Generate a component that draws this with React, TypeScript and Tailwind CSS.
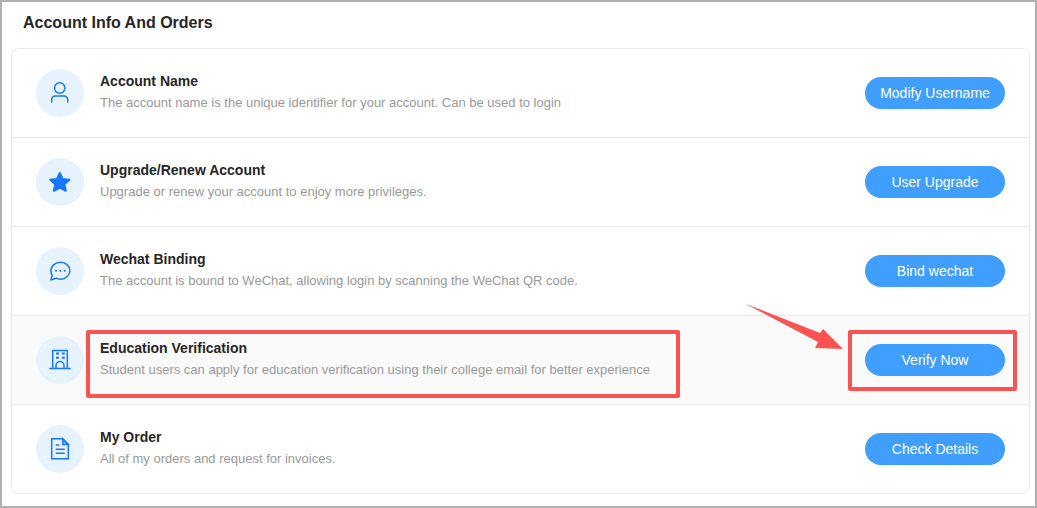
import { ReactNode } from 'react'

interface RowProps {
  icon: ReactNode
  title: string
  description: string
  action: string
  highlighted?: boolean
}

const stroke = {
  fill: 'none',
  stroke: '#1677ff',
  strokeWidth: 1.5,
}

const UserIcon = () => (
  <svg width="24" height="24" viewBox="0 0 24 24" {...stroke}>
    <circle cx="11.7" cy="7" r="5.2" />
    <path d="M3.7 21v-2.500a3.500 3.500 0 0 1 3.500-3.500h9a3.500 3.500 0 0 1 3.500 3.500V21" strokeLinecap="round" />
  </svg>
)

const StarIcon = () => (
  <svg width="24" height="24" viewBox="0 0 24 24" fill="#1677ff" stroke="#1677ff" strokeWidth="2" strokeLinejoin="round">
    <path d="M11.800 3l2.800 5.900 6.800.9-5 4.500 1.400 6.500-6-3.300-6 3.300 1.400-6.500-5-4.500 6.800-.9z" />
  </svg>
)

const ChatIcon = () => (
  <svg width="24" height="24" viewBox="0 0 24 24" {...stroke}>
    <path d="M12.500 3.200c5 0 9.400 3.600 9.400 8.500s-4.400 8.500-9.400 8.500c-1.800 0-3.200-.3-4.600-1L2.900 21l1.200-4.500a8 8 0 0 1-1.200-4.800c0-4.900 4.600-8.500 9.600-8.500z" strokeLinejoin="round" />
    <circle cx="8" cy="11.700" r="1" fill="#1677ff" stroke="none" />
    <circle cx="12.300" cy="11.700" r="1" fill="#1677ff" stroke="none" />
    <circle cx="16.700" cy="11.700" r="1" fill="#1677ff" stroke="none" />
  </svg>
)

const BuildingIcon = () => (
  <svg width="24" height="24" viewBox="0 0 24 24" {...stroke}>
    <path d="M4.700 20.500V2.500h14.600v18M1.300 20.500h21.400" />
    <path d="M8 20.500v-3a4 4 0 0 1 8 0v3" />
    <path d="M8 5.500h3M13.800 5.500h3M8 9.700h3M13.800 9.700h3" strokeWidth="2" />
  </svg>
)

const DocumentIcon = () => (
  <svg width="24" height="24" viewBox="0 0 24 24" {...stroke}>
    <path d="M3.700 1.800h11l5.600 5.700v14.300H3.700z" />
    <path d="M14.700 1.800v5.700h5.600z" fill="#1677ff" fillOpacity="0.35" />
    <path d="M7.700 8h3.600M7.700 12.300h9M7.700 16.300h9" />
  </svg>
)

const rows: RowProps[] = [
  {
    icon: <UserIcon />,
    title: 'Account Name',
    description: 'The account name is the unique identifier for your account. Can be used to login',
    action: 'Modify Username',
  },
  {
    icon: <StarIcon />,
    title: 'Upgrade/Renew Account',
    description: 'Upgrade or renew your account to enjoy more privileges.',
    action: 'User Upgrade',
  },
  {
    icon: <ChatIcon />,
    title: 'Wechat Binding',
    description: 'The account is bound to WeChat, allowing login by scanning the WeChat QR code.',
    action: 'Bind wechat',
  },
  {
    icon: <BuildingIcon />,
    title: 'Education Verification',
    description: 'Student users can apply for education verification using their college email for better experience',
    action: 'Verify Now',
    highlighted: true,
  },
  {
    icon: <DocumentIcon />,
    title: 'My Order',
    description: 'All of my orders and request for invoices.',
    action: 'Check Details',
  },
]

function Row({ icon, title, description, action, highlighted }: RowProps) {
  return (
    <div
      className={`flex h-[89px] items-center border-b border-[#e8e8e8] pl-6 pr-6 last:h-[88px] last:border-b-0 ${
        highlighted ? 'bg-[#fafafa]' : 'bg-white'
      }`}
    >
      <div className="flex h-12 w-12 shrink-0 items-center justify-center rounded-full bg-[#e6f3ff]">{icon}</div>
      <div className="ml-4 flex-1 self-start pt-6">
        <h3 className="text-[14px] leading-4 font-bold text-[#262626]">{title}</h3>
        <p className="mt-[5px] text-[13px] leading-[18px] text-[#999999]">{description}</p>
      </div>
      <button className="h-8 w-[140px] rounded-full bg-[#409eff] text-[14px] text-white">{action}</button>
    </div>
  )
}

export default function App() {
  return (
    <div className="relative h-[508px] w-[1037px] overflow-hidden border-2 border-[#b0b0b0] bg-white font-['Liberation_Sans',Arial,sans-serif]">
      <h2 className="pt-3 pl-[21px] text-[16px] leading-[18px] font-bold text-[#262626]">Account Info And Orders</h2>
      <div className="mt-4 ml-[9px] w-[1019px] overflow-hidden rounded-lg border border-[#e8e8e8]">
        {rows.map((row) => (
          <Row key={row.title} {...row} />
        ))}
      </div>

      {/* Annotations */}
      <div className="absolute top-[328px] left-[84px] h-[68px] w-[594px] rounded-[2px] border-4 border-[#fc5252]" />
      <div className="absolute top-[328px] left-[846px] h-[61px] w-[169px] rounded-[2px] border-4 border-[#fc5252]" />
      <svg className="absolute top-[300px] left-[741px]" width="110" height="50" viewBox="0 0 110 50">
        <path d="M2 1.500L77 31 80 27 100 47 72 46 75 40z" fill="#fc5252" />
      </svg>
    </div>
  )
}
